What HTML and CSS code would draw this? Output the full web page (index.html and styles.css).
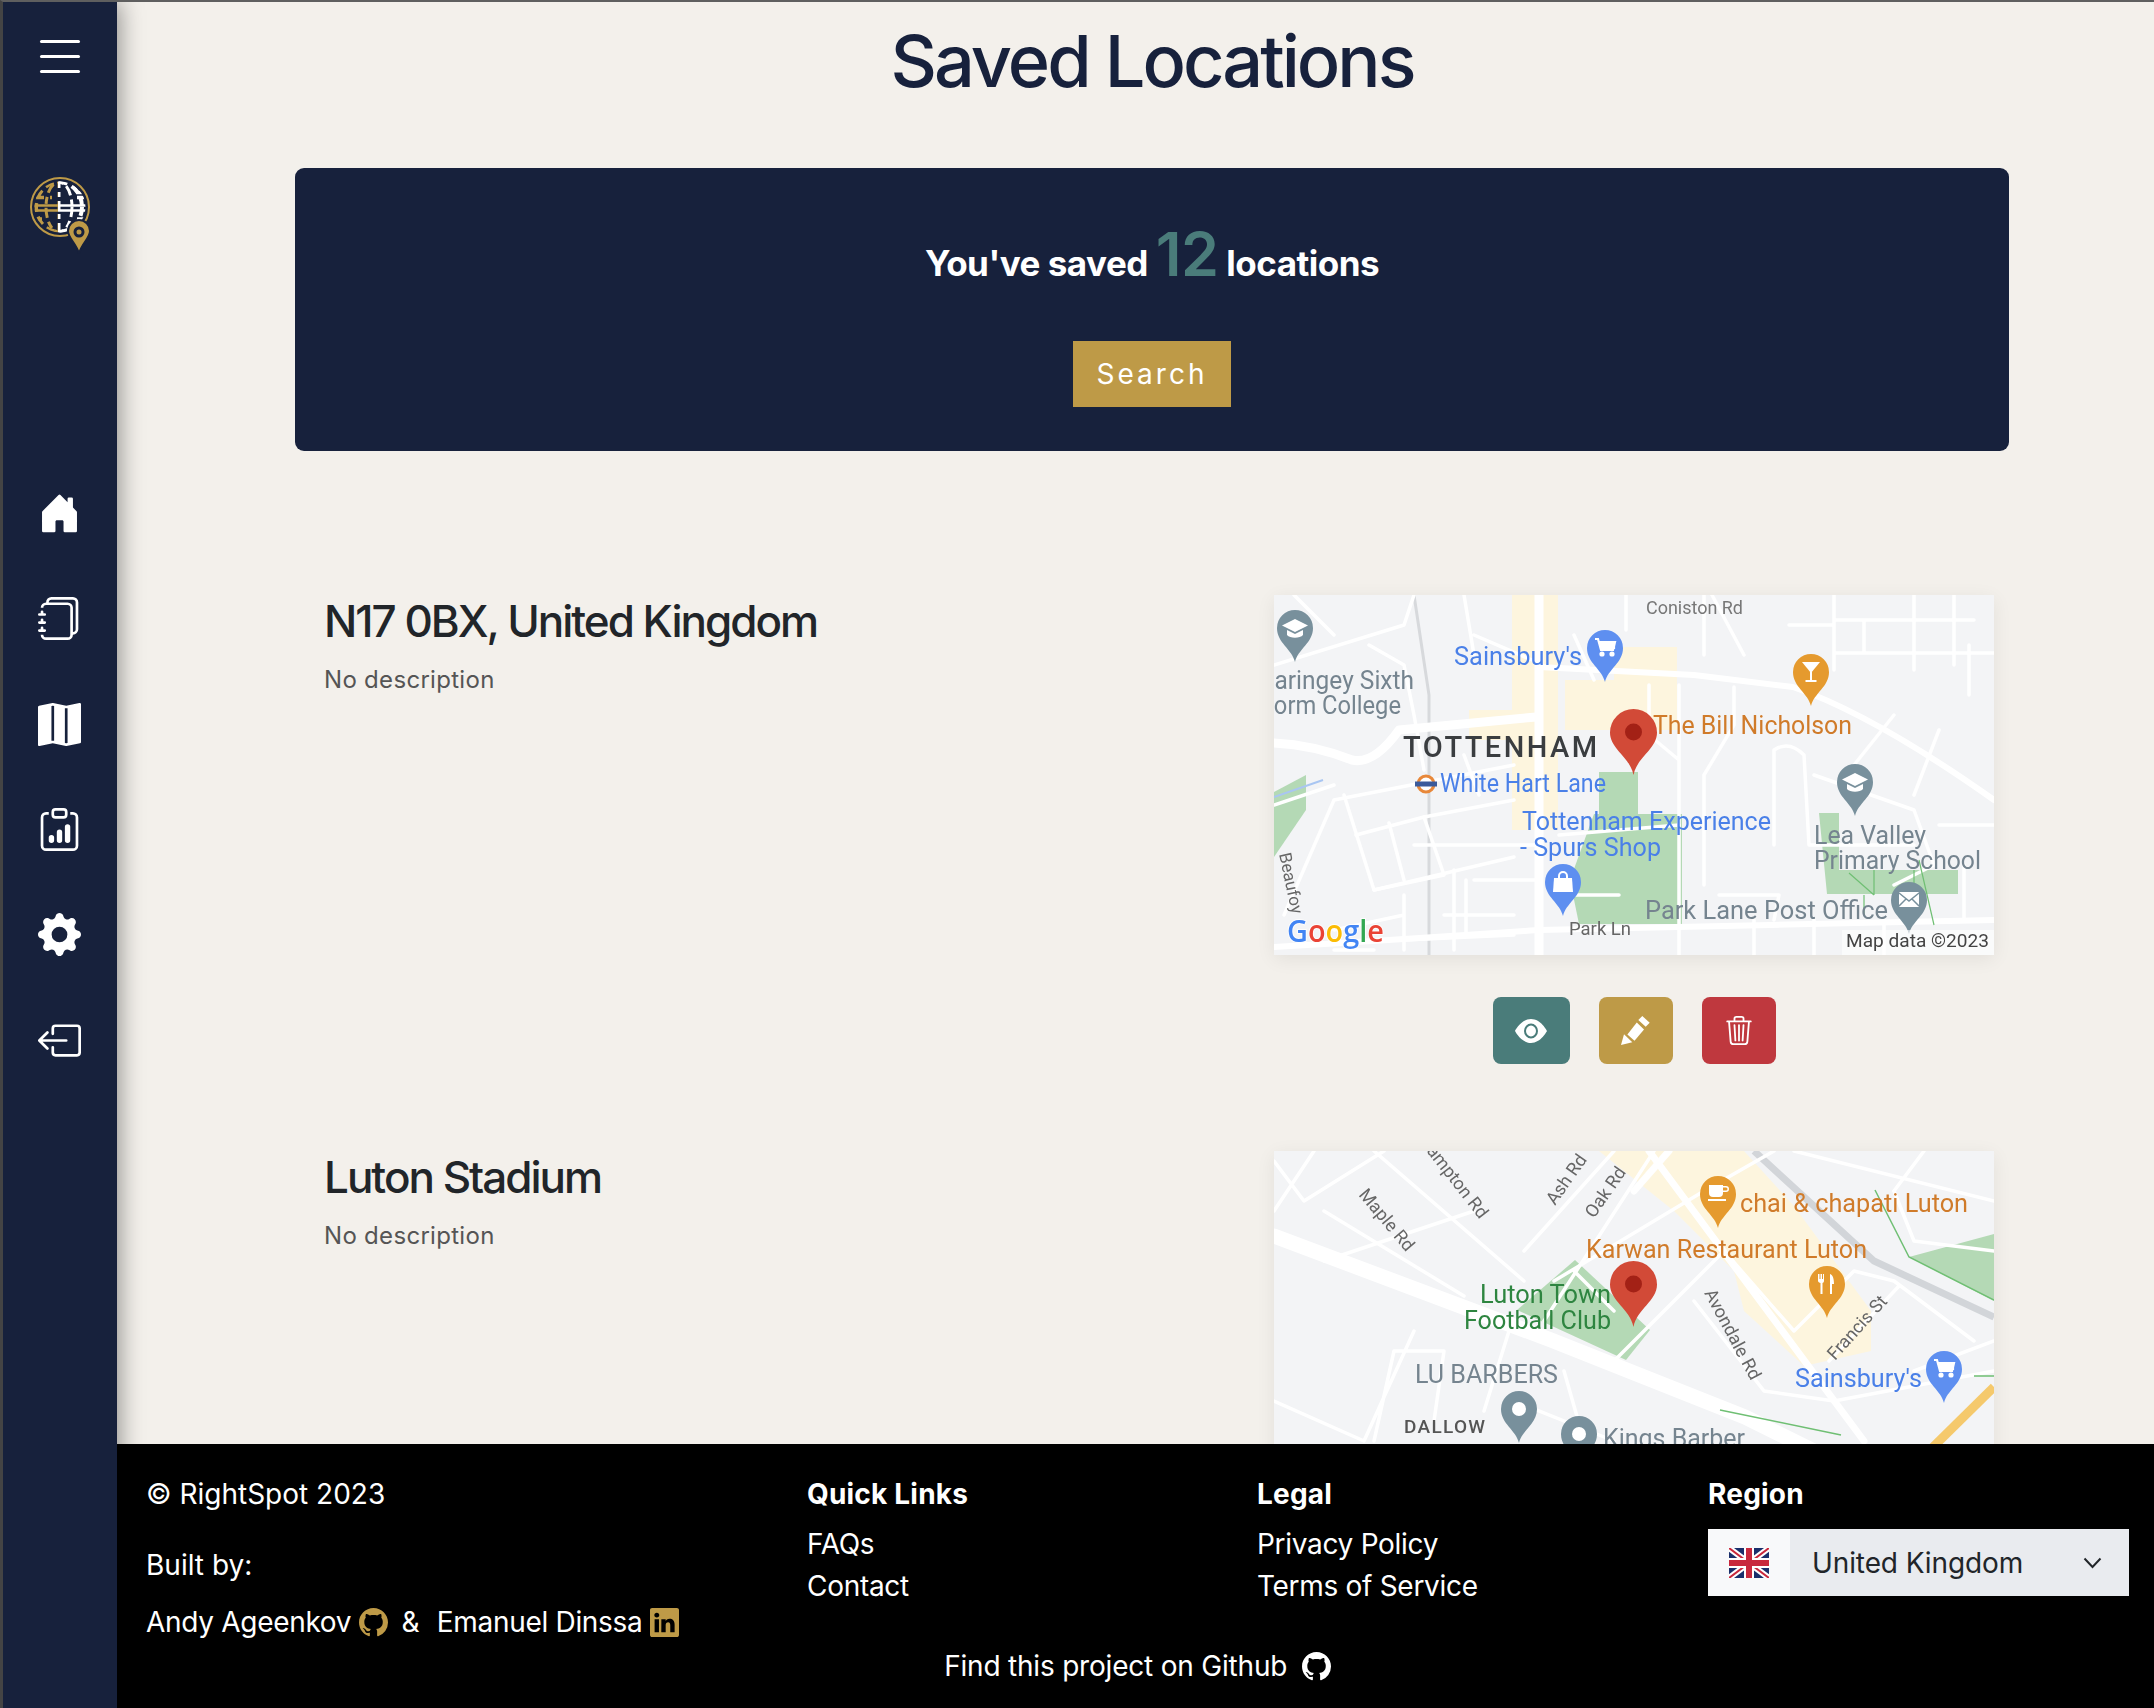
FILE: index.html
```html
<!DOCTYPE html>
<html lang="en">
<head>
<meta charset="utf-8">
<title>Saved Locations</title>
<link rel="stylesheet" href="styles.css">
</head>
<body>
<svg class="defs" width="0" height="0" aria-hidden="true">
  <defs>
    <symbol id="pin" viewBox="0 0 36 52"><path d="M18 52C15 39 0 33 0 18a18 18 0 0 1 36 0C36 33 21 39 18 52Z"/></symbol>
    <symbol id="redpin" viewBox="0 0 47 66"><path fill="#d24a37" d="M23.5 66C20 48 0 40 0 23.5a23.5 23.5 0 0 1 47 0C47 40 27 48 23.5 66Z"/><circle cx="23.5" cy="23" r="8.5" fill="#a32116"/></symbol>
    <g id="i-grad" fill="#fff"><path d="M18 9 31 15.5 18 22 5 15.5Z"/><path d="M10 20v5c3 3.500 13 3.500 16 0v-5l-8 4Z"/></g>
    <g id="i-cart" fill="none" stroke="#fff" stroke-width="2.200"><path d="M8 9h3l3 11h12l2-8H12"/><circle cx="15" cy="24" r="1.500" fill="#fff"/><circle cx="25" cy="24" r="1.500" fill="#fff"/><path d="M13 12h14v6H15Z" fill="#fff"/></g>
    <g id="i-cocktail" fill="#fff"><path d="M9 8h18L18 19Z"/><rect x="17" y="18" width="2" height="9"/><rect x="12.500" y="26" width="11" height="2"/></g>
    <g id="i-bag" fill="#fff"><path d="M9 14h18l1 14H8Z"/><path d="M13 14v-2a5 5 0 0 1 10 0v2h-2v-2a3 3 0 0 0-6 0v2Z"/></g>
    <g id="i-mail"><rect x="8" y="10" width="20" height="15" rx="1" fill="#fff"/><path d="M8 11 18 19 28 11M8 24 15 17M28 24 21 17" fill="none" stroke="#78909c" stroke-width="1.500"/></g>
    <g id="i-coffee" fill="#fff"><path d="M9 9h14v8a4 4 0 0 1-4 4h-6a4 4 0 0 1-4-4Z"/><path d="M23 10h3a2.500 2.500 0 0 1 0 6h-3v-1.500h3a1 1 0 0 0 0-3h-3Z"/><rect x="8" y="23" width="18" height="2"/></g>
    <g id="i-fork" fill="#fff"><path d="M9 8h1.500v5h1V8h1.500v5h1V8H15v7c0 1-1 2-1.500 2v11h-2V17C11 17 9 16 9 15Z"/><path d="M21 8c3 1 4 5 4 10h-2v10h-2Z"/></g>
    <circle id="i-dot" cx="18" cy="18" r="7" fill="#fff"/>
    <clipPath id="logo-left"><rect x="0" y="0" width="28" height="78"/></clipPath>
    <clipPath id="logo-right"><rect x="28" y="0" width="32" height="78"/></clipPath>
    <clipPath id="logo-disc"><circle cx="30" cy="31" r="25.500"/></clipPath>
    <g id="logo-grid" fill="none">
      <ellipse cx="29" cy="31" rx="13" ry="25" stroke-width="3" stroke-dasharray="10 4 7 4"/>
      <path d="M29 3V59" stroke-width="3" stroke-dasharray="9 4 5 4"/>
      <path d="M1 29.500H59M1 34.500H59" stroke-width="2.400"/>
      <path d="M3 21.500H14M20 21.500H22M47 21.500H57M4 43H12M47 43H56M46 16.500H54" stroke-width="3.500"/>
      <ellipse cx="29" cy="31" rx="23" ry="25" stroke-width="4" stroke-dasharray="9 5"/>
    </g>
  </defs>
</svg>

<div class="app">
  <aside class="sidebar">
    <button class="burger" type="button" aria-label="Menu"><span></span><span></span><span></span></button>
    <svg class="logo" viewBox="0 0 60 78" width="60" height="78" aria-label="RightSpot logo">
      <circle cx="30" cy="31" r="29" fill="none" stroke="#be9a47" stroke-width="2"/>
      <g clip-path="url(#logo-disc)">
        <g clip-path="url(#logo-left)" stroke="#be9a47"><use href="#logo-grid"/></g>
        <g clip-path="url(#logo-right)" stroke="#ffffff"><use href="#logo-grid"/></g>
      </g>
      <path d="M49 77.500C46 67 38 62 38 55a11 11 0 0 1 22 0C60 62 52 67 49 77.500Z" fill="#be9a47" stroke="#17213c" stroke-width="2"/>
      <circle cx="49" cy="56" r="5.500" fill="#17213c"/><circle cx="49" cy="56" r="2.500" fill="#be9a47"/>
    </svg>
    <nav class="nav">
      <a class="nav-item" href="#"><svg viewBox="0 0 16 16" class="nav-icon"><path d="M6.500 14.500v-3.505c0-.245.25-.495.5-.495h2c.25 0 .5.25.5.5v3.500a.5.5 0 0 0 .5.5h4a.5.5 0 0 0 .5-.5v-7a.5.5 0 0 0-.146-.354L13 5.793V2.500a.5.5 0 0 0-.5-.5h-1a.5.5 0 0 0-.5.5v1.293L8.354 1.146a.5.5 0 0 0-.708 0l-6 6A.5.5 0 0 0 1.500 7.500v7a.5.5 0 0 0 .5.5h4a.5.5 0 0 0 .5-.5Z"/></svg></a>
      <a class="nav-item" href="#"><svg viewBox="0 0 16 16" class="nav-icon"><path d="M5 0h8a2 2 0 0 1 2 2v10a2 2 0 0 1-2 2 2 2 0 0 1-2 2H3a2 2 0 0 1-2-2h1a1 1 0 0 0 1 1h8a1 1 0 0 0 1-1V4a1 1 0 0 0-1-1H3a1 1 0 0 0-1 1H1a2 2 0 0 1 2-2h8a2 2 0 0 1 2 2v9a1 1 0 0 0 1-1V2a1 1 0 0 0-1-1H5a1 1 0 0 0-1 1H3a2 2 0 0 1 2-2z"/><path d="M1 6v-.5a.5.5 0 0 1 1 0V6h.5a.5.5 0 0 1 0 1h-2a.5.5 0 0 1 0-1H1zm0 3v-.5a.5.5 0 0 1 1 0V9h.5a.5.5 0 0 1 0 1h-2a.5.5 0 0 1 0-1H1zm0 2.500v.5H.5a.5.5 0 0 0 0 1h2a.5.5 0 0 0 0-1H2v-.5a.5.5 0 0 0-1 0z"/></svg></a>
      <a class="nav-item" href="#"><svg viewBox="0 0 16 16" class="nav-icon"><path fill-rule="evenodd" d="M16 .5a.5.5 0 0 0-.598-.49L10.500.99 5.598.01a.5.5 0 0 0-.196 0l-5 1A.5.5 0 0 0 0 1.500v14a.5.5 0 0 0 .598.49l4.902-.98 4.902.98a.502.502 0 0 0 .196 0l5-1A.5.5 0 0 0 16 14.500V.5zM5 14.090V1.110l.5-.1.5.1v12.980l-.402-.08a.498.498 0 0 0-.196 0L5 14.090zm5 .8V1.910l.402.08a.5.5 0 0 0 .196 0L11 1.910v12.980l-.5.1-.5-.1z"/></svg></a>
      <a class="nav-item" href="#"><svg viewBox="0 0 16 16" class="nav-icon"><path d="M4 11a1 1 0 1 1 2 0v1a1 1 0 1 1-2 0v-1zm6-4a1 1 0 1 1 2 0v5a1 1 0 1 1-2 0V7zM7 9a1 1 0 0 1 2 0v3a1 1 0 1 1-2 0V9z"/><path d="M4 1.500H3a2 2 0 0 0-2 2V14a2 2 0 0 0 2 2h10a2 2 0 0 0 2-2V3.500a2 2 0 0 0-2-2h-1v1h1a1 1 0 0 1 1 1V14a1 1 0 0 1-1 1H3a1 1 0 0 1-1-1V3.500a1 1 0 0 1 1-1h1v-1z"/><path d="M9.500 1a.5.5 0 0 1 .5.5v1a.5.5 0 0 1-.5.5h-3a.5.5 0 0 1-.5-.5v-1a.5.5 0 0 1 .5-.5h3zm-3-1A1.500 1.500 0 0 0 5 1.500v1A1.500 1.500 0 0 0 6.500 4h3A1.500 1.500 0 0 0 11 2.500v-1A1.500 1.500 0 0 0 9.500 0h-3z"/></svg></a>
      <a class="nav-item" href="#"><svg viewBox="0 0 16 16" class="nav-icon"><path d="M9.405 1.050c-.413-1.400-2.397-1.400-2.810 0l-.1.34a1.464 1.464 0 0 1-2.105.872l-.31-.17c-1.283-.698-2.686.705-1.987 1.987l.169.311c.446.82.023 1.841-.872 2.105l-.34.1c-1.400.413-1.400 2.397 0 2.810l.34.1a1.464 1.464 0 0 1 .872 2.105l-.17.31c-.698 1.283.705 2.686 1.987 1.987l.311-.169a1.464 1.464 0 0 1 2.105.872l.1.34c.413 1.400 2.397 1.400 2.810 0l.1-.34a1.464 1.464 0 0 1 2.105-.872l.31.17c1.283.698 2.686-.705 1.987-1.987l-.169-.311a1.464 1.464 0 0 1 .872-2.105l.34-.1c1.400-.413 1.400-2.397 0-2.810l-.34-.1a1.464 1.464 0 0 1-.872-2.105l.17-.31c.698-1.283-.705-2.686-1.987-1.987l-.311.169a1.464 1.464 0 0 1-2.105-.872l-.1-.34zM8 10.930a2.929 2.929 0 1 1 0-5.860 2.929 2.929 0 0 1 0 5.858z"/></svg></a>
      <a class="nav-item" href="#"><svg viewBox="0 0 16 16" class="nav-icon"><path fill-rule="evenodd" d="M6 12.500a.5.5 0 0 0 .5.5h8a.5.5 0 0 0 .5-.5v-9a.5.5 0 0 0-.5-.5h-8a.5.5 0 0 0-.5.5v2a.5.5 0 0 1-1 0v-2A1.500 1.500 0 0 1 6.500 2h8A1.500 1.500 0 0 1 16 3.500v9a1.500 1.500 0 0 1-1.500 1.500h-8A1.500 1.500 0 0 1 5 12.500v-2a.5.5 0 0 1 1 0v2z"/><path fill-rule="evenodd" d="M.146 8.354a.5.5 0 0 1 0-.708l3-3a.5.5 0 1 1 .708.708L1.707 7.500H10.500a.5.5 0 0 1 0 1H1.707l2.147 2.146a.5.5 0 0 1-.708.708l-3-3z"/></svg></a>
    </nav>
  </aside>

  <div class="main">
    <main class="content">
      <h1 class="title">Saved Locations</h1>
      <section class="banner">
        <p class="count">You've saved <span class="count-num">12</span> locations</p>
        <button class="search-btn" type="button">Search</button>
      </section>

      <article class="item">
        <div>
          <h3 class="item-title">N17 0BX, United Kingdom</h3>
          <p class="item-desc">No description</p>
        </div>
        <div>
          <svg class="map" viewBox="0 0 720 360" width="720" height="360" role="img" aria-label="Map of Tottenham">
            <rect width="720" height="360" fill="#f3f4f6"/>
            <g fill="#fdf5de">
              <rect x="238" y="0" width="46" height="235"/>
              <rect x="291" y="85" width="112" height="50"/>
              <rect x="340" y="52" width="63" height="40"/>
              <rect x="195" y="115" width="50" height="30"/>
            </g>
            <g fill="#b4d9b5">
              <rect x="325" y="177" width="39" height="45"/>
              <path d="M320 219H408V329H305L296 285Z"/>
              <path d="M0 197 32 180V215L0 262Z"/>
              <path d="M545 218H565V275H684V299H553Z"/>
            </g>
            <path d="M0 202 49 185" fill="none" stroke="#a9c6f2" stroke-width="2"/>
            <path d="M140 0 155 100V360" fill="none" stroke="#d7d9dc" stroke-width="3"/>
            <g fill="none" stroke="#fff" stroke-linecap="round" stroke-linejoin="round">
              <g stroke-width="9">
                <path d="M265 0V360"/>
                <path d="M0 148Q40 150 78 165 100 170 125 135L262 122"/>
              </g>
              <g stroke-width="6">
                <path d="M265 72 420 80 519 92Q600 120 720 205"/>
                <path d="M0 352Q120 345 265 335L720 325"/>
              </g>
              <g stroke-width="3.500">
                <path d="M10 320 60 205 240 170"/>
                <path d="M70 200 100 295 240 262"/>
                <path d="M82 240 150 222 170 280 100 295"/>
                <path d="M115 228 130 285M150 222 240 205M190 160 205 200"/>
                <path d="M130 300V355M180 275V355M60 335 130 320"/>
                <path d="M140 120 150 175M95 50 130 70 140 120"/>
                <path d="M0 70 130 30 140 0M20 0 60 40M200 40 258 65M190 0 200 60"/>
                <path d="M265 250H140M285 240 405 230M200 285H262M192 285V340"/>
                <path d="M405 90V360M375 90V140L405 165M430 0V60"/>
                <path d="M500 250V155Q515 145 530 160L535 250H640"/>
                <path d="M560 0V75M640 0V75M560 25H700M560 58H720M680 0V70M515 30H560M590 25V58"/>
                <path d="M695 50V100M620 120 580 170M665 135 640 200M540 180 640 215 660 270 620 290"/>
                <path d="M665 230H720M690 270V325M445 300 505 300 500 325"/>
                <path d="M345 300H300M480 325V360M540 325V360M610 325V360"/>
                <path d="M0 210 60 190M170 320H240M100 355H60M130 345 240 340"/>
                <path d="M438 0 470 60M352 0V35M300 40 320 85M460 92V130L430 180M430 180V290"/>
              </g>
            </g>
            <path d="M575 278 600 300M600 275V300M640 275V300M590 300V320M645 265 660 330" fill="none" stroke="#6fbf73" stroke-width="1.200"/>

            <g class="map-text" font-size="25">
              <text x="140" y="94" text-anchor="end" fill="#75848f" textLength="157" lengthAdjust="spacingAndGlyphs">Haringey Sixth</text>
              <text x="127" y="119" text-anchor="end" fill="#75848f" textLength="140" lengthAdjust="spacingAndGlyphs">Form College</text>
              <text x="180" y="70" fill="#4a80e8" textLength="128" lengthAdjust="spacingAndGlyphs">Sainsbury's</text>
              <text x="372" y="19" font-size="18" fill="#777" textLength="97" lengthAdjust="spacingAndGlyphs">Coniston Rd</text>
              <text x="379" y="139" fill="#d07b2a" textLength="199" lengthAdjust="spacingAndGlyphs">The Bill Nicholson</text>
              <text x="129" y="162" font-size="29" font-weight="500" fill="#3a3d40" textLength="194" lengthAdjust="spacing">TOTTENHAM</text>
              <text x="166" y="197" fill="#4a80e8" textLength="166" lengthAdjust="spacingAndGlyphs">White Hart Lane</text>
              <text x="248" y="235" fill="#4a80e8" textLength="249" lengthAdjust="spacingAndGlyphs">Tottenham Experience</text>
              <text x="246" y="261" fill="#4a80e8" textLength="141" lengthAdjust="spacingAndGlyphs">- Spurs Shop</text>
              <text x="540" y="249" fill="#75848f" textLength="112" lengthAdjust="spacingAndGlyphs">Lea Valley</text>
              <text x="540" y="274" fill="#75848f" textLength="167" lengthAdjust="spacingAndGlyphs">Primary School</text>
              <text x="371" y="324" fill="#75848f" textLength="243" lengthAdjust="spacingAndGlyphs">Park Lane Post Office</text>
              <text x="295" y="340" font-size="18" fill="#666" textLength="62" lengthAdjust="spacingAndGlyphs">Park Ln</text>
              <text transform="translate(5 259) rotate(78)" font-size="17" fill="#666" textLength="62" lengthAdjust="spacingAndGlyphs">Beaufoy</text>
            </g>

            <use href="#pin" x="3" y="15" width="36" height="52" fill="#78909c"/>
            <use href="#i-grad" transform="translate(3 15)"/>
            <use href="#pin" x="313" y="35" width="36" height="52" fill="#5e8ff0"/>
            <use href="#i-cart" transform="translate(313 35)"/>
            <use href="#pin" x="519" y="59" width="36" height="52" fill="#e59a2e"/>
            <use href="#i-cocktail" transform="translate(519 59)"/>
            <use href="#pin" x="563" y="169" width="36" height="52" fill="#78909c"/>
            <use href="#i-grad" transform="translate(563 169)"/>
            <use href="#pin" x="271" y="269" width="36" height="52" fill="#5e8ff0"/>
            <use href="#i-bag" transform="translate(271 269)"/>
            <use href="#pin" x="617" y="287" width="36" height="52" fill="#78909c"/>
            <use href="#i-mail" transform="translate(617 287)"/>
            <circle cx="152" cy="189" r="8" fill="#fff" stroke="#e8883a" stroke-width="3"/>
            <rect x="141" y="186.500" width="22" height="5" fill="#3b5a9a"/>
            <use href="#redpin" x="336" y="114" width="47" height="66"/>

            <rect x="568" y="335" width="152" height="25" fill="#fff" fill-opacity=".6"/>
            <text class="map-text" x="572" y="352" font-size="18" fill="#444" textLength="143" lengthAdjust="spacingAndGlyphs">Map data ©2023</text>
            <text class="map-google" x="13" y="347" font-size="30" textLength="97" lengthAdjust="spacingAndGlyphs"><tspan fill="#4285f4">G</tspan><tspan fill="#ea4335">o</tspan><tspan fill="#fbbc05">o</tspan><tspan fill="#4285f4">g</tspan><tspan fill="#34a853">l</tspan><tspan fill="#ea4335">e</tspan></text>
          </svg>
          <div class="actions">
            <button class="act act-view" type="button" aria-label="View"><svg class="act-eye" viewBox="0 2 16 12" preserveAspectRatio="none" fill="#fff"><path d="M10.500 8a2.500 2.500 0 1 1-5 0 2.500 2.500 0 0 1 5 0z"/><path d="M0 8s3-5.500 8-5.500S16 8 16 8s-3 5.500-8 5.500S0 8 0 8zm8 3.500a3.500 3.500 0 1 0 0-7 3.500 3.500 0 0 0 0 7z"/></svg></button>
            <button class="act act-edit" type="button" aria-label="Edit"><svg class="act-pencil" viewBox="0 0 29 29" fill="#fff"><path d="M21.300 0 28.700 6.700 24.700 10.700 17.300 4Z"/><path d="M15.800 6.500 23 13.400 13.500 24.800 6.400 18.500Z"/><path d="M3 18.300 11.300 26.300 0 29Z"/></svg></button>
            <button class="act act-del" type="button" aria-label="Delete"><svg class="act-trash" viewBox="0 0 16 16" fill="#fff"><path d="M6.500 1h3a.5.5 0 0 1 .5.5v1H6v-1a.5.5 0 0 1 .5-.5ZM11 2.500v-1A1.500 1.500 0 0 0 9.500 0h-3A1.500 1.500 0 0 0 5 1.500v1H2.506a.58.58 0 0 0-.01 0H1.500a.5.5 0 0 0 0 1h.538l.853 10.660A2 2 0 0 0 4.885 16h6.230a2 2 0 0 0 1.994-1.840l.853-10.660h.538a.5.5 0 0 0 0-1h-.995a.59.59 0 0 0-.01 0H11Zm1.958 1-.846 10.580a1 1 0 0 1-.997.92h-6.230a1 1 0 0 1-.997-.92L3.042 3.500h9.916Zm-7.487 1a.5.5 0 0 1 .528.47l.5 8.500a.5.5 0 0 1-.998.06L5 5.030a.5.5 0 0 1 .47-.53Zm5.058 0a.5.5 0 0 1 .47.53l-.5 8.500a.5.5 0 1 1-.998-.06l.5-8.500a.5.5 0 0 1 .528-.47ZM8 4.500a.5.5 0 0 1 .5.5v8.500a.5.5 0 0 1-1 0V5a.5.5 0 0 1 .5-.5Z"/></svg></button>
          </div>
        </div>
      </article>

      <article class="item">
        <div>
          <h3 class="item-title">Luton Stadium</h3>
          <p class="item-desc">No description</p>
        </div>
        <div>
          <svg class="map" viewBox="0 0 720 360" width="720" height="360" role="img" aria-label="Map of Luton">
            <rect width="720" height="360" fill="#f3f4f6"/>
            <path d="M325 0H470L520 55 597 160 597 200 530 215 470 160 460 120 400 60Z" fill="#fdf5de"/>
            <path d="M301 109 376 179 352 209 243 159Z" fill="#b4d9b5"/>
            <path d="M635 106 720 83V150Z" fill="#b4d9b5"/>
            <path d="M480 0 600 110 720 166" fill="none" stroke="#d2d5d9" stroke-width="7"/>
            <g fill="none" stroke="#fff" stroke-linecap="round" stroke-linejoin="round">
              <path d="M0 85 277 189 471 266 560 310 720 345" stroke-width="15"/>
              <g stroke-width="7">
                <path d="M375 0 590 290"/>
                <path d="M395 0 360 40"/>
              </g>
              <g stroke-width="3.500">
                <path d="M0 60 40 0M100 0 250 130M110 0 30 50 0 10"/>
                <path d="M50 110 200 60M190 145 50 60"/>
                <path d="M250 100 340 0M270 170 380 0M300 120 340 160"/>
                <path d="M280 130 430 40 500 0M340 210 450 100 520 180 580 120 620 130 700 190"/>
                <path d="M420 150 490 240 560 250 720 220"/>
                <path d="M0 250 90 290 140 180M100 290 120 200 170 200 160 270"/>
                <path d="M210 260 235 180M290 220 310 290M240 250 340 290"/>
                <path d="M520 0 720 50M620 40 650 0M555 210 625 135M640 220 720 190"/>
                <path d="M620 40 640 90 720 100"/>
              </g>
            </g>
            <path d="M601 39 635 106 720 149M446 259 567 284M700 225H720" fill="none" stroke="#6fbf73" stroke-width="1.500"/>
            <path d="M655 300 720 236" fill="none" stroke="#f5c96c" stroke-width="9"/>
            <g class="map-text" font-size="25">
              <text x="466" y="61" fill="#d07b2a" textLength="228" lengthAdjust="spacingAndGlyphs">chai &amp; chapati Luton</text>
              <text x="312" y="107" fill="#d07b2a" textLength="281" lengthAdjust="spacingAndGlyphs">Karwan Restaurant Luton</text>
              <text x="206" y="152" fill="#2e8540" textLength="131" lengthAdjust="spacingAndGlyphs">Luton Town</text>
              <text x="190" y="178" fill="#2e8540" textLength="147" lengthAdjust="spacingAndGlyphs">Football Club</text>
              <text x="141" y="232" fill="#75848f" textLength="143" lengthAdjust="spacingAndGlyphs">LU BARBERS</text>
              <text x="130" y="282" font-size="19" font-weight="500" fill="#555" textLength="81" lengthAdjust="spacing">DALLOW</text>
              <text x="329" y="296" fill="#75848f" textLength="142" lengthAdjust="spacingAndGlyphs">Kings Barber</text>
              <text x="521" y="236" fill="#4a80e8" textLength="127" lengthAdjust="spacingAndGlyphs">Sainsbury's</text>
              <g font-size="18" fill="#666">
                <text transform="translate(84 44) rotate(50)">Maple Rd</text>
                <text transform="translate(152 0) rotate(52)">ampton Rd</text>
                <text transform="translate(281 55) rotate(-55)">Ash Rd</text>
                <text transform="translate(320 68) rotate(-55)">Oak Rd</text>
                <text transform="translate(430 142) rotate(62)" textLength="100">Avondale Rd</text>
                <text transform="translate(561 210) rotate(-48)">Francis St</text>
              </g>
            </g>
            <use href="#pin" x="426" y="25" width="36" height="52" fill="#e59a2e"/>
            <use href="#i-coffee" transform="translate(426 25)"/>
            <use href="#pin" x="535" y="115" width="36" height="52" fill="#e59a2e"/>
            <use href="#i-fork" transform="translate(535 115)"/>
            <use href="#pin" x="652" y="200" width="36" height="52" fill="#5e8ff0"/>
            <use href="#i-cart" transform="translate(652 200)"/>
            <use href="#pin" x="227" y="240" width="36" height="52" fill="#78909c"/>
            <use href="#i-dot" transform="translate(227 240)"/>
            <use href="#pin" x="287" y="265" width="36" height="52" fill="#78909c"/>
            <use href="#i-dot" transform="translate(287 265)"/>
            <use href="#redpin" x="336" y="110" width="47" height="66"/>
          </svg>
        </div>
      </article>
    </main>

    <footer class="footer">
      <div class="f-grid">
        <div>
          <p class="f-line">© RightSpot 2023</p>
          <p class="f-line f-built">Built by:</p>
          <p class="f-line f-people">Andy Ageenkov
            <svg class="f-ico f-gold" viewBox="0 0 16 16"><path d="M8 0C3.580 0 0 3.580 0 8c0 3.540 2.290 6.530 5.470 7.590.4.07.55-.17.55-.38 0-.19-.01-.82-.01-1.490-2.010.37-2.530-.49-2.690-.94-.09-.23-.48-.94-.82-1.130-.28-.15-.68-.52-.01-.53.63-.01 1.080.58 1.230.82.72 1.210 1.870.87 2.330.66.07-.52.28-.87.51-1.070-1.780-.2-3.640-.89-3.640-3.950 0-.87.31-1.590.82-2.150-.08-.2-.36-1.020.08-2.120 0 0 .67-.21 2.200.82.64-.18 1.320-.27 2-.27.68 0 1.360.09 2 .27 1.530-1.040 2.200-.82 2.200-.82.44 1.100.16 1.920.08 2.120.51.56.82 1.270.82 2.150 0 3.070-1.870 3.750-3.650 3.950.29.25.54.73.54 1.480 0 1.070-.01 1.930-.01 2.200 0 .21.15.46.55.38A8.012 8.012 0 0 0 16 8c0-4.420-3.580-8-8-8z"/></svg>
            <span class="f-amp">&amp;</span>
            Emanuel Dinssa
            <svg class="f-ico f-gold" viewBox="0 0 16 16"><path d="M0 1.146C0 .513.526 0 1.175 0h13.650C15.474 0 16 .513 16 1.146v13.708c0 .633-.526 1.146-1.175 1.146H1.175C.526 16 0 15.487 0 14.854V1.146zm4.943 12.248V6.169H2.542v7.225h2.401zm-1.200-8.212c.837 0 1.358-.554 1.358-1.248-.015-.709-.52-1.248-1.342-1.248-.822 0-1.359.54-1.359 1.248 0 .694.521 1.248 1.327 1.248h.016zm4.908 8.212V9.359c0-.216.016-.432.08-.586.173-.431.568-.878 1.232-.878.869 0 1.216.662 1.216 1.634v3.865h2.401V9.250c0-2.220-1.184-3.252-2.764-3.252-1.274 0-1.845.7-2.165 1.193v.025h-.016a5.540 5.540 0 0 1 .016-.025V6.169h-2.400c.03.678 0 7.225 0 7.225h2.400z"/></svg>
          </p>
        </div>
        <div>
          <p class="f-line f-head">Quick Links</p>
          <a class="f-line f-link" href="#">FAQs</a>
          <a class="f-line f-link" href="#">Contact</a>
        </div>
        <div>
          <p class="f-line f-head">Legal</p>
          <a class="f-line f-link" href="#">Privacy Policy</a>
          <a class="f-line f-link" href="#">Terms of Service</a>
        </div>
        <div>
          <p class="f-line f-head">Region</p>
          <div class="region">
            <span class="region-flag">
              <svg viewBox="0 0 40 30" width="40" height="30">
                <rect width="40" height="30" fill="#1a2f6b"/>
                <path d="M0 0 40 30M40 0 0 30" stroke="#fff" stroke-width="6"/>
                <path d="M0 0 40 30M40 0 0 30" stroke="#c8283c" stroke-width="2"/>
                <path d="M20 0V30M0 15H40" stroke="#fff" stroke-width="10"/>
                <path d="M20 0V30M0 15H40" stroke="#c8283c" stroke-width="6"/>
              </svg>
            </span>
            <span class="region-name">United Kingdom</span>
            <svg class="region-chev" viewBox="0 0 19 12"><path d="M1.500 1.500 9.500 10 17.500 1.500" fill="none" stroke="#212529" stroke-width="2"/></svg>
          </div>
        </div>
      </div>
      <p class="f-line f-github">Find this project on Github
        <svg class="f-ico f-white" viewBox="0 0 16 16"><path d="M8 0C3.580 0 0 3.580 0 8c0 3.540 2.290 6.530 5.470 7.590.4.07.55-.17.55-.38 0-.19-.01-.82-.01-1.490-2.010.37-2.530-.49-2.690-.94-.09-.23-.48-.94-.82-1.130-.28-.15-.68-.52-.01-.53.63-.01 1.080.58 1.230.82.72 1.210 1.870.87 2.330.66.07-.52.28-.87.51-1.070-1.780-.2-3.640-.89-3.640-3.950 0-.87.31-1.590.82-2.150-.08-.2-.36-1.020.08-2.120 0 0 .67-.21 2.200.82.64-.18 1.320-.27 2-.27.68 0 1.360.09 2 .27 1.530-1.040 2.200-.82 2.200-.82.44 1.100.16 1.920.08 2.120.51.56.82 1.270.82 2.150 0 3.070-1.870 3.750-3.650 3.950.29.25.54.73.54 1.480 0 1.070-.01 1.930-.01 2.200 0 .21.15.46.55.38A8.012 8.012 0 0 0 16 8c0-4.420-3.580-8-8-8z"/></svg>
      </p>
    </footer>
  </div>
</div>
</body>
</html>
```

FILE: styles.css
```css
* { box-sizing: border-box; }

html, body { margin: 0; height: 100%; }

body {
  font-family: Inter, "Liberation Sans", sans-serif;
  background: #f3f0eb;
  color: #212529;
  border-top: 2px solid #5f5f5f;
  border-left: 3px solid #444;
  overflow: hidden;
}

p, h1, h3 { margin: 0; }

.defs { position: absolute; }

.app { display: flex; height: 1706px; }

.sidebar {
  flex: 0 0 114px;
  background: #17213c;
  display: flex;
  flex-direction: column;
  align-items: center;
  padding-right: 1px;
  box-shadow: 3px 0 22px rgba(0, 0, 0, .4);
  position: relative;
  z-index: 2;
}

.burger {
  margin-top: 38px;
  width: 40px;
  height: 33px;
  padding: 0;
  border: 0;
  background: none;
  display: flex;
  flex-direction: column;
  justify-content: space-between;
}
.burger span { display: block; height: 3px; border-radius: 2px; background: #fff; }

.logo { margin-top: 103px; }

.nav { margin-top: 207px; display: flex; flex-direction: column; }
.nav-item { height: 105.3px; display: flex; align-items: center; justify-content: center; }
.nav-icon { width: 43px; height: 43px; fill: #fff; }

.main { flex: 1; min-width: 0; display: flex; flex-direction: column; }

.content {
  flex: 1;
  min-height: 0;
  overflow: hidden;
  padding: 16px 145px 0 178px;
}

.title {
  font-size: 72px;
  font-weight: 500;
  line-height: 1.2;
  letter-spacing: -3px;
  text-align: center;
  color: #17213c;
  margin-bottom: 64px;
}

.banner {
  height: 283px;
  background: #17213c;
  border-radius: 9px;
  display: flex;
  flex-direction: column;
  align-items: center;
  padding-top: 56px;
}

.count {
  font-size: 35px;
  font-weight: 700;
  letter-spacing: -.5px;
  color: #fff;
  line-height: 67px;
  height: 67px;
}
.count-num { font-size: 61px; font-weight: 600; color: #4a7c7a; line-height: 1; }

.search-btn {
  margin-top: 50px;
  width: 158px;
  height: 66px;
  border: 0;
  padding: 0;
  background: #be9a47;
  color: #fff;
  font: 400 28px Inter, sans-serif;
  letter-spacing: 3px;
}

.item {
  display: grid;
  grid-template-columns: 1fr 720px;
  padding: 0 15px 0 29px;
  margin-top: 144px;
  height: 412px;
}

.item-title { font-size: 44px; font-weight: 500; line-height: 1.2; letter-spacing: -2px; color: #212529; }
.item-desc { font-size: 24px; line-height: 36px; margin-top: 14px; letter-spacing: .3px; color: #555; }

.map {
  display: block;
  box-shadow: 0 4px 18px rgba(0, 0, 0, .07);
  filter: blur(.45px);
}
.map-text { font-family: Roboto, sans-serif; }
.map-google {
  font-family: "Open Sans", sans-serif;
  font-weight: 600;
  paint-order: stroke;
  stroke: rgba(255, 255, 255, .8);
  stroke-width: 2px;
}

.actions { display: flex; justify-content: center; gap: 29px; margin-top: 42px; }

.act {
  height: 67px;
  width: 74px;
  padding: 0;
  border: 0;
  border-radius: 8px;
  display: flex;
  align-items: center;
  justify-content: center;
}
.act-view { width: 77px; background: #4a7c7a; }
.act-edit { background: #be9a47; }
.act-del { background: #bf383e; }
.act-eye { width: 32px; height: 26px; }
.act-pencil { width: 29px; height: 29px; }
.act-trash { width: 30px; height: 29px; }

.footer {
  flex: 0 0 264px;
  background: #000;
  color: #fff;
  padding: 29px 25px 0 29px;
  position: relative;
  z-index: 1;
}

.f-grid { display: grid; grid-template-columns: 661px 450px 451px 421px; }

.f-line { display: block; font-size: 28px; line-height: 43px; color: #fff; text-decoration: none; }
.f-head { font-weight: 700; letter-spacing: .2px; margin-bottom: 7px; }
.f-link { line-height: 42px; letter-spacing: -.3px; }
.f-built { margin-top: 28px; }
.f-people { margin-top: 14px; white-space: nowrap; letter-spacing: -.3px; }
.f-amp { margin: 0 10px 0 6px; }

.f-ico { width: 29px; height: 29px; vertical-align: -5px; }
.f-gold { fill: #be9a47; }
.f-white { fill: #fff; }

.f-github { text-align: center; margin-top: 1px; letter-spacing: -.2px; }
.f-github .f-ico { margin-left: 7px; }

.region {
  margin-top: 13px;
  height: 67px;
  width: 421px;
  background: #e9ebef;
  display: flex;
  align-items: center;
  color: #212529;
}
.region-flag {
  width: 82px;
  height: 100%;
  background: #f8f9fa;
  display: flex;
  align-items: center;
  justify-content: center;
  margin-right: 22px;
}
.region-name { font-size: 28px; flex: 1; letter-spacing: -.1px; }
.region-chev { width: 19px; height: 12px; margin-right: 27px; }
```
